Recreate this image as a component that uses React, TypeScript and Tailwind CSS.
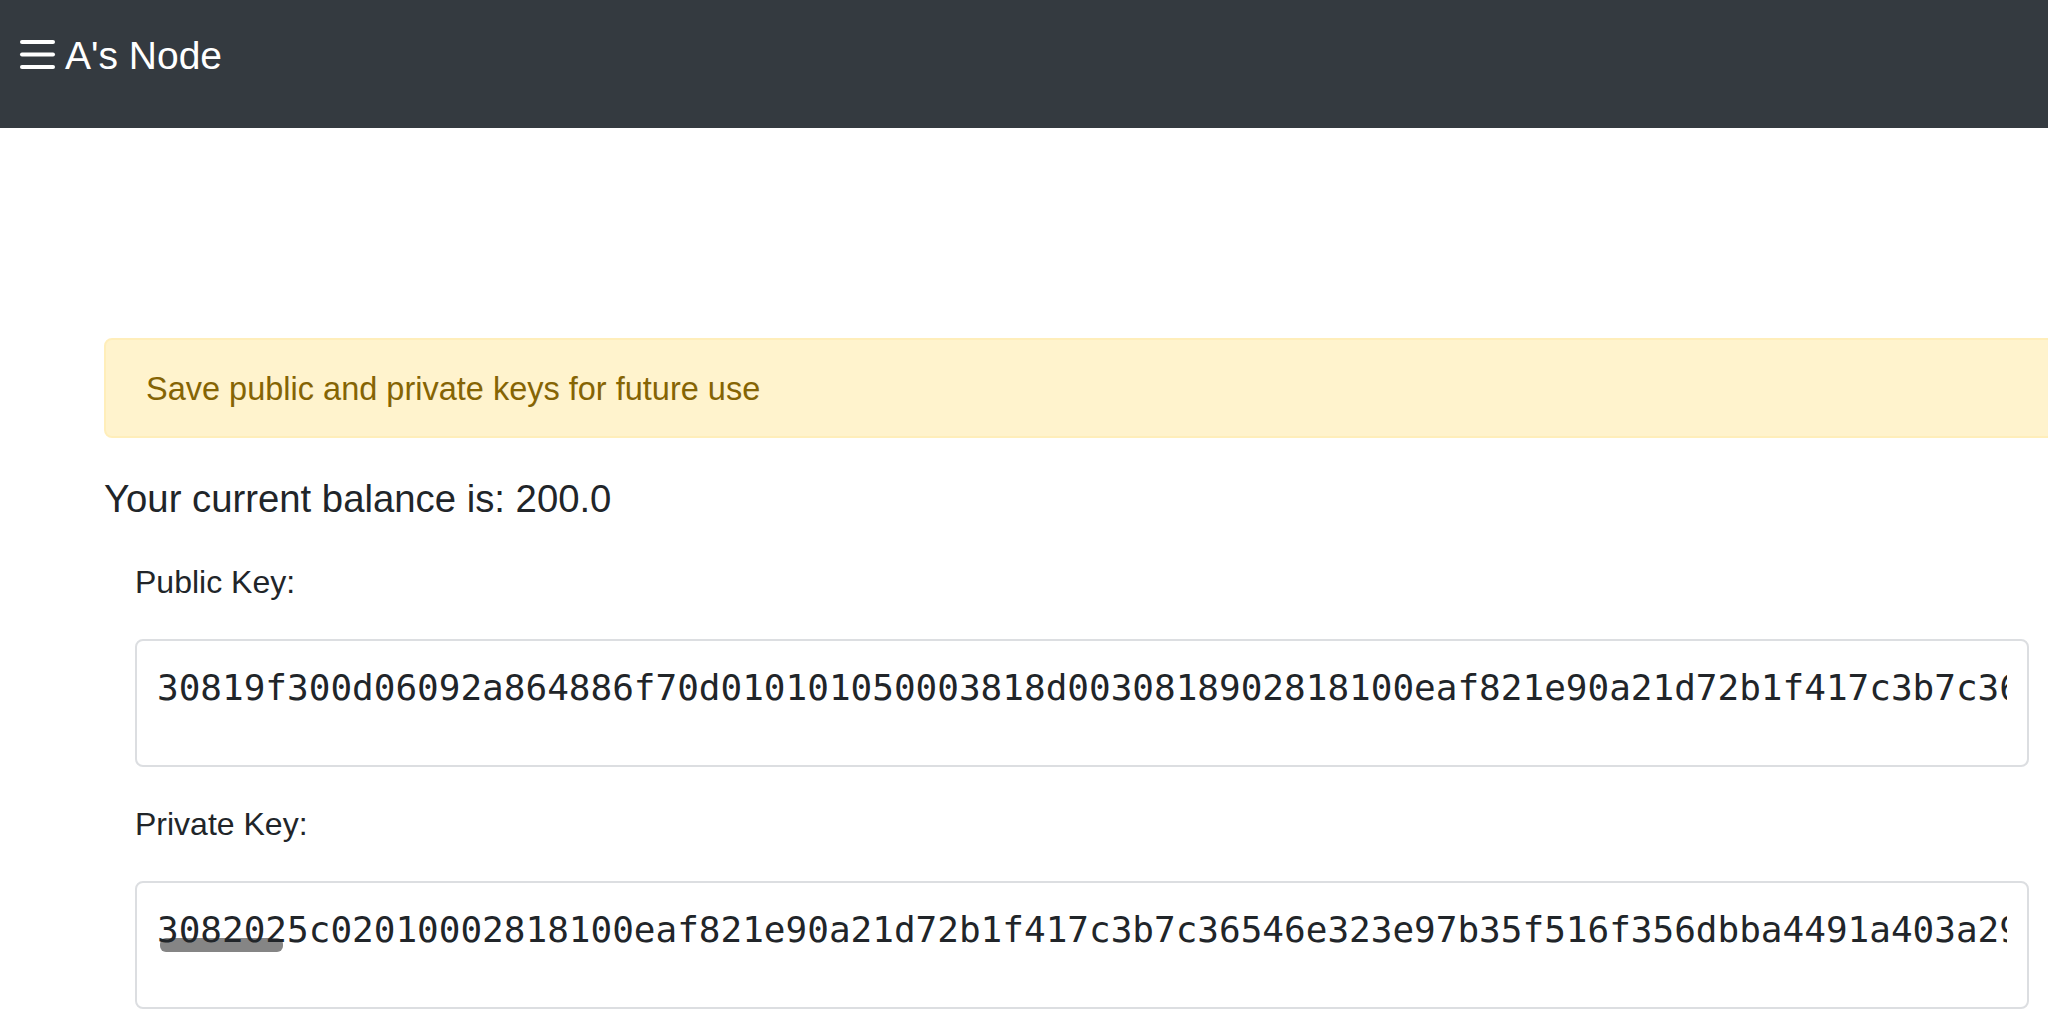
import React from 'react';

const PUBLIC_KEY =
  '30819f300d06092a864886f70d010101050003818d0030818902818100eaf821e90a21d72b1f417c3b7c36546e323e97b35f516f356dbba4491a403a29c7d1e0f2a3b4c5d6e7f8091a2b3c4d5e6f70203010001';
const PRIVATE_KEY =
  '3082025c02010002818100eaf821e90a21d72b1f417c3b7c36546e323e97b35f516f356dbba4491a403a29c7d1e0f2a3b4c5d6e7f8091a2b3c4d5e6f702030100010281805b3a9c1d2e4f6a7b8c9d0e1f2a3b4c5d';

function KeyField({ label, value, marker }: { label: string; value: string; marker?: boolean }) {
  return (
    <div>
      <div className="text-[32px] leading-[48px] text-[#212529]">{label}</div>
      <div className="relative mt-[33px] h-[128px] overflow-hidden rounded-[8px] border-2 border-[#dcdee1] bg-white px-[20px] pt-[20px]">
        {/* grey autocomplete marker under the first chars */}
        {marker && (
          <div className="absolute left-[23px] top-[55px] h-[14px] w-[123px] rounded-[6px] bg-[#858585]" />
        )}
        <div
          className="relative overflow-hidden whitespace-nowrap text-[36px] leading-[54px] text-[#212529]"
          style={{ fontFamily: '"DejaVu Sans Mono", "Liberation Mono", monospace' }}
        >
          {value}
        </div>
      </div>
    </div>
  );
}

export default function App() {
  return (
    <div
      className="min-h-screen w-full overflow-hidden bg-white"
      style={{ fontFamily: '"Liberation Sans", Arial, sans-serif' }}
    >
      <header className="flex h-[128px] items-start bg-[#343a40] pl-[18px] pt-[36px]">
        <svg width="38" height="40" viewBox="0 0 38 40" className="mt-[-1px]" fill="none">
          <line x1="4" y1="7" x2="35" y2="7" stroke="white" strokeWidth="4" strokeLinecap="round" />
          <line x1="4" y1="19.5" x2="35" y2="19.5" stroke="white" strokeWidth="4" strokeLinecap="round" />
          <line x1="4" y1="32" x2="35" y2="32" stroke="white" strokeWidth="4" strokeLinecap="round" />
        </svg>
        <span className="ml-[9px] text-[39px] leading-[39px] text-white">A's Node</span>
      </header>

      <main className="pl-[104px] pt-[210px]">
        <div className="-mr-[60px] rounded-[8px] border-2 border-[#ffeeba] bg-[#fff3cd] pb-[23px] pl-[40px] pt-[25px] text-[32.5px] leading-[48px] text-[#856404]">
          Save public and private keys for future use
        </div>

        <div className="mt-[37px] text-[38.3px] leading-[48px] text-[#212529]">Your current balance is: 200.0</div>

        <div className="mt-[35px] flex flex-col gap-[33px] pl-[31px] pr-[19px]">
          <KeyField label="Public Key:" value={PUBLIC_KEY} />
          <KeyField label="Private Key:" value={PRIVATE_KEY} marker />
        </div>
      </main>
    </div>
  );
}
